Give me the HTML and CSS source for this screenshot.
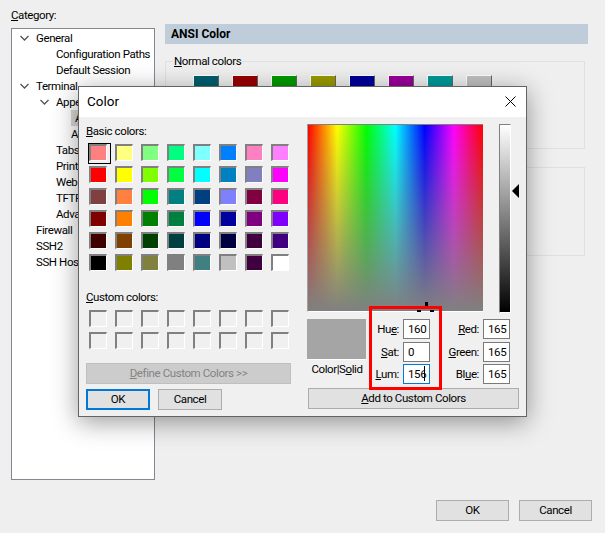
FILE: index.html
```html
<!DOCTYPE html>
<html lang="en">
<head>
    <meta charset="UTF-8">
    <title>Color</title>
    <link rel="stylesheet" href="styles.css">
</head>
<body>
    <div class="window">
        <div class="columns">
            <div class="category">
                <div class="category-label"><u>C</u>ategory:</div>
                <div class="tree">
                    <div class="row lvl0"><svg class="chevron" width="9" height="6" viewBox="0 0 9 6"><path d="M0.5 1 L4.5 5 L8.5 1" /></svg>General</div>
                    <div class="row lvl1">Configuration Paths</div>
                    <div class="row lvl1">Default Session</div>
                    <div class="row lvl0"><svg class="chevron" width="9" height="6" viewBox="0 0 9 6"><path d="M0.5 1 L4.5 5 L8.5 1" /></svg>Terminal</div>
                    <div class="row lvl1"><svg class="chevron" width="9" height="6" viewBox="0 0 9 6"><path d="M0.5 1 L4.5 5 L8.5 1" /></svg>Appearance</div>
                    <div class="row lvl2"><span class="selected">ANSI Color</span></div>
                    <div class="row lvl2">Advanced</div>
                    <div class="row lvl1">Tabs</div>
                    <div class="row lvl1">Printing</div>
                    <div class="row lvl1">Web</div>
                    <div class="row lvl1">TFTP</div>
                    <div class="row lvl1">Advanced</div>
                    <div class="row lvl0">Firewall</div>
                    <div class="row lvl0">SSH2</div>
                    <div class="row lvl0">SSH Hostkeys</div>
                </div>
            </div>
            <div class="settings">
                <div class="settings-header">ANSI Color</div>
                <fieldset class="group normal-group">
                    <legend><u>N</u>ormal colors</legend>
                    <div class="ansi-row">
                        <div class="ansi c1"></div>
                        <div class="ansi c2"></div>
                        <div class="ansi c3"></div>
                        <div class="ansi c4"></div>
                        <div class="ansi c5"></div>
                        <div class="ansi c6"></div>
                        <div class="ansi c7"></div>
                        <div class="ansi c8"></div>
                    </div>
                </fieldset>
                <div class="group bright-group"></div>
            </div>
        </div>
        <div class="window-buttons">
            <button class="button wide">OK</button>
            <button class="button wide">Cancel</button>
        </div>
    </div>

    <div class="dialog">
        <div class="titlebar">
            <span class="title">Color</span>
            <svg class="close" width="11" height="11" viewBox="0 0 11 11"><path d="M0.5 0.5 L10.5 10.5 M10.5 0.5 L0.5 10.5" /></svg>
        </div>
        <div class="dialog-body">
            <div class="left-panel">
                <div class="panel-label"><u>B</u>asic colors:</div>
                <div class="swatches">
                    <div class="swatch picked" style="background:#ff8080"></div>
                    <div class="swatch" style="background:#ffff80"></div>
                    <div class="swatch" style="background:#80ff80"></div>
                    <div class="swatch" style="background:#00ff80"></div>
                    <div class="swatch" style="background:#80ffff"></div>
                    <div class="swatch" style="background:#0080ff"></div>
                    <div class="swatch" style="background:#ff80c0"></div>
                    <div class="swatch" style="background:#ff80ff"></div>
                    <div class="swatch" style="background:#ff0000"></div>
                    <div class="swatch" style="background:#ffff00"></div>
                    <div class="swatch" style="background:#80ff00"></div>
                    <div class="swatch" style="background:#00ff40"></div>
                    <div class="swatch" style="background:#00ffff"></div>
                    <div class="swatch" style="background:#0080c0"></div>
                    <div class="swatch" style="background:#8080c0"></div>
                    <div class="swatch" style="background:#ff00ff"></div>
                    <div class="swatch" style="background:#804040"></div>
                    <div class="swatch" style="background:#ff8040"></div>
                    <div class="swatch" style="background:#00ff00"></div>
                    <div class="swatch" style="background:#008080"></div>
                    <div class="swatch" style="background:#004080"></div>
                    <div class="swatch" style="background:#8080ff"></div>
                    <div class="swatch" style="background:#800040"></div>
                    <div class="swatch" style="background:#ff0080"></div>
                    <div class="swatch" style="background:#800000"></div>
                    <div class="swatch" style="background:#ff8000"></div>
                    <div class="swatch" style="background:#008000"></div>
                    <div class="swatch" style="background:#008040"></div>
                    <div class="swatch" style="background:#0000ff"></div>
                    <div class="swatch" style="background:#0000a0"></div>
                    <div class="swatch" style="background:#800080"></div>
                    <div class="swatch" style="background:#8000ff"></div>
                    <div class="swatch" style="background:#400000"></div>
                    <div class="swatch" style="background:#804000"></div>
                    <div class="swatch" style="background:#004000"></div>
                    <div class="swatch" style="background:#004040"></div>
                    <div class="swatch" style="background:#000080"></div>
                    <div class="swatch" style="background:#000040"></div>
                    <div class="swatch" style="background:#400040"></div>
                    <div class="swatch" style="background:#400080"></div>
                    <div class="swatch" style="background:#000000"></div>
                    <div class="swatch" style="background:#808000"></div>
                    <div class="swatch" style="background:#808040"></div>
                    <div class="swatch" style="background:#808080"></div>
                    <div class="swatch" style="background:#408080"></div>
                    <div class="swatch" style="background:#c0c0c0"></div>
                    <div class="swatch" style="background:#400040"></div>
                    <div class="swatch" style="background:#ffffff"></div>
                </div>
                <div class="panel-label custom-label"><u>C</u>ustom colors:</div>
                <div class="swatches">
                    <div class="swatch"></div><div class="swatch"></div><div class="swatch"></div><div class="swatch"></div>
                    <div class="swatch"></div><div class="swatch"></div><div class="swatch"></div><div class="swatch"></div>
                    <div class="swatch"></div><div class="swatch"></div><div class="swatch"></div><div class="swatch"></div>
                    <div class="swatch"></div><div class="swatch"></div><div class="swatch"></div><div class="swatch"></div>
                </div>
                <button class="button define" disabled><u>D</u>efine Custom Colors &gt;&gt;</button>
                <div class="dialog-buttons">
                    <button class="button small default">OK</button>
                    <button class="button small">Cancel</button>
                </div>
            </div>
            <div class="right-panel">
                <div class="picker">
                    <div class="spectrum">
                        <span class="cross-v"></span>
                        <span class="cross-l"></span>
                        <span class="cross-r"></span>
                    </div>
                    <div class="lum-bar">
                        <svg class="lum-arrow" width="8" height="14" viewBox="0 0 8 14"><path d="M7 0 L7 14 L0 7 Z" /></svg>
                    </div>
                </div>
                <div class="values">
                    <div class="preview-col">
                        <div class="preview"></div>
                        <div class="preview-label">Color|S<u>o</u>lid</div>
                    </div>
                    <div class="fields">
                        <label>Hu<u>e</u>:</label><div class="field">160</div>
                        <label><u>R</u>ed:</label><div class="field">165</div>
                        <label><u>S</u>at:</label><div class="field">0</div>
                        <label><u>G</u>reen:</label><div class="field">165</div>
                        <label><u>L</u>um:</label><div class="field focused">156<span class="caret"></span></div>
                        <label>Bl<u>u</u>e:</label><div class="field">165</div>
                    </div>
                </div>
                <button class="button add"><u>A</u>dd to Custom Colors</button>
            </div>
        </div>
        <div class="annotation"></div>
    </div>
</body>
</html>
```

FILE: styles.css
```css
* {
    box-sizing: border-box;
}

body {
    margin: 0;
    width: 605px;
    height: 533px;
    background-color: #efefef;
    color: #000;
    font-family: Roboto, 'Open Sans', sans-serif;
    font-size: 11.5px;
    letter-spacing: -0.4px;
    line-height: 16px;
    position: relative;
    overflow: hidden;
}

.window {
    display: flex;
    flex-direction: column;
    height: 100%;
}

.columns {
    display: flex;
    gap: 10px;
    padding-left: 11px;
    height: 500px;
}

.category {
    width: 144px;
    padding-top: 7px;
}

.category-label {
    height: 21px;
}

.tree {
    height: 452px;
    border: 1px solid #828790;
    background-color: #fff;
    padding-top: 1px;
}

.row {
    display: flex;
    align-items: center;
    height: 16px;
    white-space: nowrap;
    overflow: hidden;
    position: relative;
}

.lvl0 {
    padding-left: 24px;
}

.lvl1 {
    padding-left: 44px;
}

.lvl2 {
    padding-left: 59px;
}

.selected {
    background-color: #d9d9d9;
    padding: 0 4px;
}

.chevron {
    position: absolute;
    left: 8px;
    top: 5px;
    fill: none;
    stroke: #555;
    stroke-width: 1.3;
}

.lvl1 .chevron {
    left: 28px;
}

.settings {
    width: 423px;
    padding-top: 24px;
}

.settings-header {
    height: 20px;
    padding: 2px 6px;
    background-color: #bfcddb;
    font-size: 12px;
    font-weight: 700;
    letter-spacing: 0;
}

.group {
    width: 420px;
    border: 1px solid #e0e0e0;
    margin: 0;
    padding: 0;
}

.normal-group {
    height: 96px;
    margin-top: 9px;
}

.normal-group legend {
    margin-left: 7px;
    padding: 0 1px;
}

.bright-group {
    height: 89px;
    margin-top: 18px;
}

.ansi-row {
    display: flex;
    gap: 13px;
    margin: 6px 0 0 27px;
}

.ansi {
    width: 26px;
    height: 20px;
    border: 1px solid #fff;
    border-right-color: #666;
    border-bottom-color: #666;
}

.c1 { background-color: #005f6e; }
.c2 { background-color: #990000; }
.c3 { background-color: #009900; }
.c4 { background-color: #999900; }
.c5 { background-color: #000099; }
.c6 { background-color: #990099; }
.c7 { background-color: #009999; }
.c8 { background-color: #c0c0c0; }

.window-buttons {
    display: flex;
    justify-content: flex-end;
    gap: 10px;
    padding-right: 13px;
}

.button {
    height: 21px;
    padding: 0;
    border: 1px solid #adadad;
    background-color: #e1e1e1;
    color: #000;
    font: inherit;
    letter-spacing: inherit;
    line-height: 17px;
}

.wide {
    width: 73px;
}

.dialog {
    position: absolute;
    left: 78px;
    top: 86px;
    width: 449px;
    height: 331px;
    border: 1px solid #646464;
    background-color: #f0f0f0;
    box-shadow: 0 5px 24px rgba(0, 0, 0, 0.4);
}

.titlebar {
    display: flex;
    align-items: center;
    justify-content: space-between;
    height: 30px;
    padding: 0 10px 2px 8px;
    background-color: #fff;
}

.title {
    font-size: 13.5px;
    letter-spacing: 0;
}

.close {
    fill: none;
    stroke: #000;
    stroke-width: 1;
}

.dialog-body {
    display: flex;
    gap: 16px;
    padding: 7px 0 0 7px;
}

.left-panel {
    width: 205px;
}

.panel-label {
    height: 16px;
    margin-top: -1px;
    margin-bottom: 5px;
}

.custom-label {
    margin-top: 18px;
}

.swatches {
    display: grid;
    grid-template-columns: repeat(8, 18px);
    grid-auto-rows: 17px;
    gap: 5px 8px;
    margin-left: 3px;
}

.swatch {
    border: 2px solid #808080;
    border-right: 1px solid #fff;
    border-bottom: 1px solid #fff;
    background-color: #f0f0f0;
    position: relative;
}

.picked::after {
    content: '';
    position: absolute;
    left: -3px;
    top: -3px;
    width: 21px;
    height: 19px;
    border: 1px solid #000;
}

.define {
    display: block;
    width: 205px;
    margin-top: 14px;
    background-color: #cccccc;
    border-color: #bfbfbf;
    color: #838383;
}

.dialog-buttons {
    display: flex;
    gap: 8px;
    margin-top: 5px;
}

.small {
    width: 64px;
}

.default {
    border: 2px solid #0078d7;
    line-height: 15px;
}

.picker {
    display: flex;
    gap: 16px;
    position: relative;
}

.spectrum {
    width: 176px;
    height: 188px;
    border-top: 1px solid #808080;
    border-left: 1px solid #a0a0a0;
    border-bottom: 1px solid #fff;
    background: linear-gradient(to bottom, rgba(128, 128, 128, 0), #808080),
        linear-gradient(to right, #ff0000, #ffff00, #00ff00, #00ffff, #0000ff, #ff00ff, #ff0000);
    position: relative;
}

.cross-v,
.cross-l,
.cross-r {
    position: absolute;
    background-color: #000;
}

.cross-v {
    left: 117px;
    top: 177px;
    width: 3px;
    height: 5px;
}

.cross-l {
    left: 109px;
    top: 185px;
    width: 4px;
    height: 2px;
}

.cross-r {
    left: 122px;
    top: 185px;
    width: 4px;
    height: 2px;
}

.lum-bar {
    width: 12px;
    height: 189px;
    border-top: 1px solid #808080;
    border-left: 1px solid #808080;
    border-right: 1px solid #fff;
    border-bottom: 1px solid #fff;
    background: linear-gradient(to bottom, #ffffff, #000000);
    position: relative;
}

.lum-arrow {
    position: absolute;
    left: 12px;
    top: 59px;
    fill: #000;
}

.values {
    display: flex;
    margin-top: 6px;
}

.preview-col {
    width: 59px;
    text-align: center;
}

.preview {
    height: 41px;
    background-color: #a5a5a5;
    border-bottom: 1px solid #fff;
}

.preview-label {
    width: 60px;
    margin-top: 1px;
    white-space: nowrap;
}

.fields {
    display: grid;
    grid-template-columns: 33px 27px 45px 27px;
    grid-auto-rows: 20px;
    gap: 2.5px 4px;
}

.fields label {
    text-align: right;
    line-height: 20px;
}

.field {
    border: 1px solid #7a7a7a;
    background-color: #fff;
    padding-left: 4px;
    line-height: 18px;
    white-space: nowrap;
}

.focused {
    border-color: #0078d7;
}

.caret {
    display: inline-block;
    width: 1px;
    height: 15px;
    margin-left: -2px;
    vertical-align: -3px;
    background-color: #000;
}

.add {
    display: block;
    width: 211px;
    margin: 4px 0 0 1px;
}

.annotation {
    position: absolute;
    left: 290px;
    top: 219px;
    width: 73px;
    height: 84px;
    border: 3px solid #ff0000;
}
```
